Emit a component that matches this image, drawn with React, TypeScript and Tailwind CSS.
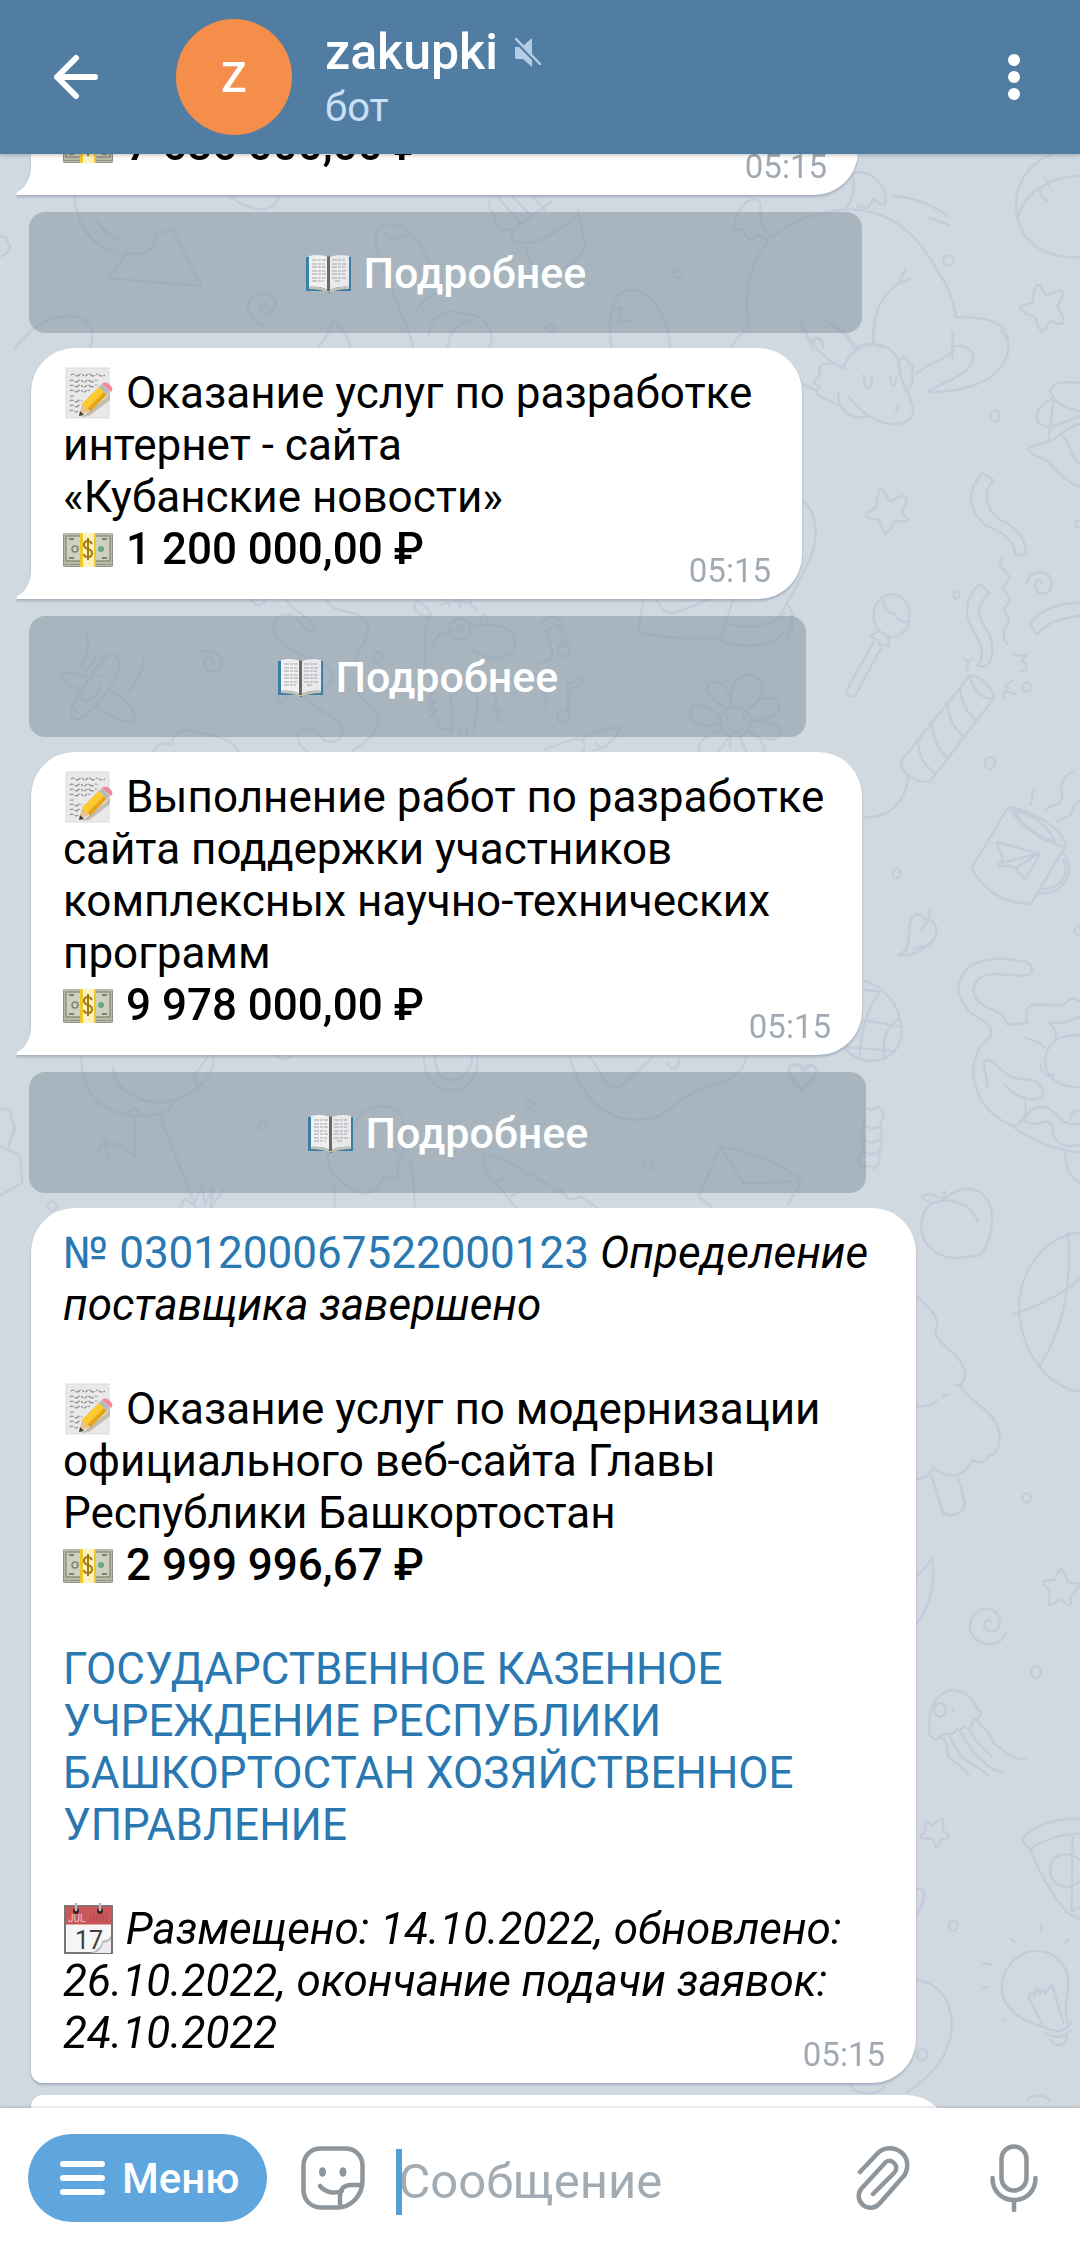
import clsx from "clsx"
import React from "react"

type IconProps = {
    className?: string
}

/* Emoji */

const inlineEmoji = "inline-block align-top w-[52px] h-[52px]"

const MemoEmoji: React.FC<IconProps> = ({ className }) => (
    <svg viewBox="0 0 52 52" className={className} role="img" aria-label="memo">
        <rect x="3" y="1" width="43" height="50" fill="#e9e9ea" stroke="#dcdcde" />
        <g stroke="#8a8a8d" strokeWidth="1.1" fill="none" strokeDasharray="4 1 6 1.5 2 1">
            <path d="M8 8q2-2 4 0t4 0 4 0 4 0 4 0 4 0 4 0 6 0" />
            <path d="M7 14q2-2 4 0t4 0 4 0 4 0 4 0 4 0 4 0" />
            <path d="M7 19q2-2 4 0t4 0 4 0 4 0 4 0 4 0 4 0" />
            <path d="M7 24q2-2 4 0t4 0 4 0 4 0 4 0" />
            <path d="M7 29h5M7 34q2-2 4 0t4 0 4 0M7 39q2-2 4 0t4 0 2 0M7 44q2-2 4 0t4 0" />
        </g>
        <path d="M19 50l24-19 4-6v8L26 49z" fill="#6b5a2f" opacity=".3" />
        <path d="M16 49l3-12 7 7z" fill="#e8c391" />
        <path d="M16 49l1-5 4 4z" fill="#3d3d3d" />
        <path d="M19 37l17-17 8 8-17 17c-1-2-2-3-3-3s-1-2-2-2-1-2-3-3z" fill="#e9a31a" />
        <path d="M19 37l17-17 5 5-17 17c-1 0-1-2-2-2s-1-2-3-3z" fill="#fbcb2f" />
        <path d="M36 20l3-3 8 8-3 3z" fill="#b4b8bf" />
        <path d="M39 17c2-2 5-2 8 1s3 5 1 7z" fill="#f08a98" />
    </svg>
)

const MoneyEmoji: React.FC<IconProps> = ({ className }) => (
    <svg viewBox="0 0 52 52" className={className} role="img" aria-label="money">
        <rect x="0" y="10" width="50" height="34" rx="2" fill="#8f8f80" />
        <rect x="1" y="10" width="48" height="31" rx="1" fill="#b9baa9" />
        <rect x="3" y="13" width="44" height="25" fill="#cfd0c0" stroke="#8f9080" strokeWidth="1.5" />
        <path d="M6 16h5M6 35h5M39 16h5M39 35h5" stroke="#7d7f6f" strokeWidth="2" />
        <path d="M1 42.500h48" stroke="#c3c3b5" />
        <circle cx="12" cy="26" r="3" fill="none" stroke="#7f8272" strokeWidth="1.500" />
        <circle cx="38" cy="26" r="3" fill="#6aa682" />
        <path d="M17 10h16v34H17z" fill="#efc62c" />
        <path d="M20 10h11v34H20z" fill="#faf3bd" />
        <path d="M29 21c-1-2-2-3-4-3s-4 1-4 4 2 3 4 4 4 1 4 4-2 4-4 4-4-1-4-3M25 15v22" fill="none" stroke="#a37a12" strokeWidth="2" />
    </svg>
)

const CalendarEmoji: React.FC<IconProps> = ({ className }) => (
    <svg viewBox="0 0 52 52" className={className} role="img" aria-label="calendar">
        <rect x="2" y="3" width="47" height="47" fill="#f6f6f6" stroke="#4b4b50" strokeWidth="1.500" />
        <path d="M2.500 3.500h46v18h-46z" fill="#c9585b" />
        <path d="M28 12v7M31 11v8M34 12v7M37 11v8M40 12v7M43 11v8" stroke="#b34448" />
        <circle cx="13" cy="8" r="3" fill="#3a2224" />
        <circle cx="37" cy="8" r="3" fill="#3a2224" />
        <path d="M13 0v7M37 0v7" stroke="#b9bcc0" strokeWidth="2.500" strokeLinecap="round" />
        <text x="5" y="19" fontSize="10" fontStyle="normal" fill="#f3c9ca" fontFamily="Roboto, sans-serif">JUL</text>
        <text x="12" y="46" fontSize="25" fontStyle="normal" fill="#3f3f44" fontFamily="Roboto, sans-serif">17</text>
        <path d="M48 32c-1 4-5 5-9 6-1 6-6 10-12 12h21z" fill="#bdbdc0" />
        <path d="M48 37c-3 2-5 2-8 3-1 5-4 8-8 10h16z" fill="#ececee" />
    </svg>
)

const BookEmoji: React.FC<IconProps> = ({ className }) => (
    <svg viewBox="2 0 48 52" className={className} role="img" aria-label="book">
        <path d="M3 10h45v34H30l-4 2-4-2H3z" fill="#3c7fa5" />
        <path d="M6 9c7-2 14-1 19 1v33c-5-3-12-4-19-3z" fill="#f0f0f2" />
        <path d="M46 9c-7-2-14-1-19 1v33c5-3 12-4 19-3z" fill="#e9e9ec" />
        <path d="M6 40c7-1 14 0 19 3h2c5-3 12-4 19-3v2c-7 0-13 1-18 3h-4c-5-2-11-3-18-3z" fill="#c5c2b4" />
        <path d="M24 9.500h3V44h-3z" fill="#6b6961" />
        <g stroke="#a3a3a9" strokeWidth="1" strokeDasharray="5 1 3 1">
            <path d="M9 13h14M9 17h13M9 20h14M9 24h13M9 27h14M9 31h13M9 34h12M29 13h13M29 17h14M29 20h13M29 24h14M29 27h13M29 31h14M32 34h6" />
        </g>
    </svg>
)

/* Bar icons */

const BackIcon: React.FC<IconProps> = ({ className }) => (
    <svg viewBox="0 0 46 46" className={className} fill="none" stroke="currentColor" strokeWidth="6" strokeLinecap="round" strokeLinejoin="round">
        <path d="M41 23H4M22 4L3 23l19 19" />
    </svg>
)

const MutedIcon: React.FC<IconProps> = ({ className }) => (
    <svg viewBox="0 0 28 30" className={className}>
        <path d="M9 9L18 1v18.500zM1 10h4l13 13v7L9 22H3c-1 0-2-1-2-2z" fill="currentColor" />
        <path d="M2 2l24 25" stroke="currentColor" strokeWidth="2.500" strokeLinecap="round" />
    </svg>
)

const DotsIcon: React.FC<IconProps> = ({ className }) => (
    <svg viewBox="0 0 12 46" className={className} fill="currentColor">
        <circle cx="6" cy="6" r="6" />
        <circle cx="6" cy="23" r="6" />
        <circle cx="6" cy="40" r="6" />
    </svg>
)

const MenuIcon: React.FC<IconProps> = ({ className }) => (
    <svg viewBox="0 0 45 36" className={className} stroke="currentColor" strokeWidth="6" strokeLinecap="round">
        <path d="M3 4h39M3 18h39M3 32h39" />
    </svg>
)

const StickerIcon: React.FC<IconProps> = ({ className }) => (
    <svg viewBox="0 0 64 64" className={className} fill="none" stroke="currentColor" strokeWidth="4.500" strokeLinecap="round" strokeLinejoin="round">
        <path d="M20 2.500h24c10 0 17.500 7 17.500 17.500v14C61.500 50 50 61.500 36 61.500H20C10 61.500 2.500 54 2.500 44V20C2.500 9.500 10 2.500 20 2.500z" />
        <path d="M61 39H50c-7 0-11 4-11 11v11" />
        <path d="M19 40c6 7 15 8 22 5" />
        <ellipse cx="21.500" cy="26" rx="3.500" ry="4.800" fill="currentColor" stroke="none" />
        <ellipse cx="42" cy="26" rx="3.500" ry="4.800" fill="currentColor" stroke="none" />
    </svg>
)

const AttachIcon: React.FC<IconProps> = ({ className }) => (
    <svg viewBox="0 0 54 64" className={className} fill="none" stroke="currentColor" strokeWidth="4.500" strokeLinecap="round" strokeLinejoin="round">
        <path d="M4 26L21 8c7-8 18-7 25-1s7 18 0 25L24 57c-5 6-12 6-17 2s-6-12-1-17l22-24c3-4 7-4 10-1s3 7 0 10L17 48" />
    </svg>
)

const MicIcon: React.FC<IconProps> = ({ className }) => (
    <svg viewBox="0 0 48 68" className={className} fill="none" stroke="currentColor" strokeWidth="4.500" strokeLinecap="round">
        <rect x="11.500" y="2.500" width="25" height="44" rx="12.500" />
        <path d="M2.500 34c0 13 9 22 21.500 22s21.500-9 21.500-22M24 57v9" />
    </svg>
)

/* Wallpaper */

const Doodles = () => (
    <svg
        viewBox="0 154 1080 1954"
        preserveAspectRatio="xMidYMin slice"
        aria-hidden="true"
        className="absolute inset-0 w-full h-full [&_*]:[vector-effect:non-scaling-stroke]"
        fill="none"
        stroke="#c5cbda"
        strokeWidth="2.300"
        strokeLinecap="round"
        strokeLinejoin="round"
    >
        {/* Paper plane, croissant, drum */}
        <g transform="scale(.3827 .3333)">
            <path d="M330 758L285 835l243 23-80-173-43 25c5 35-20 60-75 48zM195 590c5 90 45 150 110 165M250 660c20 30 40 50 65 65" />
            <path d="M690 978c-40-18-50-58-35-83 25-25 60-15 67 15-2 25-27 40-40 25-7-20 8-30 20-17" />
            <path d="M985 750c-15-50 15-90 55-75 50 25 70 85 90 125M985 750c25 100 75 200 95 290M1005 700c10 30 40 15 60 5M1090 930c20-40 50-60 100-50M1120 1010c0-50 40-90 90-70 50 0 90 50 70 100M1170 1045c0-50 30-80 70-85" />
            <path d="M1280 600c-15 40 30 40 10 70 20 10 15 30 50 15M1340 690l100-85M1355 725c45 20 125-45 155-85M1340 690c-10 20 0 40 15 35M1375 740c0 60 60 90 80 70 40-10 60-40 75-70l-20-110M1300 590l60 80M1340 590l50 60M1390 590l35 40" />
            <path d="M40 1045c40-65 100-105 160-95 40 15 50 50 35 95M830 1045c20-35 40-55 38-87 32 32 42 52 47 87M0 710c20-5 15 15 25 25 10 15-20 35-25 33M600 590c30 25 80 50 110 30 15-10 15-20 18-30" />
            <circle cx="1440" cy="985" r="12" />
        </g>

        {/* Flying dragon, ball, star */}
        <g transform="translate(600 0) scale(.3333)">
            <path d="M398 690c12-50 32-90 62-92 30 2 20 27 22 52 3 30 18 55 36 62-18 13-33 6-43-9l-10 9c-15 13-25 8-35-22-10-5-25 5-32 0zM735 628c25-28 30-58 23-103 12-13 42-10 62 5 30 25 40 50 37 80-17 5-27-5-37-15-5 20-15 30-25 30-10-10-15-15-27 7" />
            <path d="M450 998c-15-68-15-148 20-223 40-85 150-140 270-147 130-3 220 82 270 182 30 40 52 90 58 142 62-2 122 8 147 38 15 25 10 60 7 80M880 588c70 4 120 32 165 60M990 653l58 23M895 850c-45 35-80 80-73 180M915 810l-20 40 35-12M605 968l35 82M680 965c40 20 70 50 90 85M395 1045c10-30 30-50 55-50M1057 995c5 30 0 50 0 80M760 1045c30-15 60-20 90 0M640 1025c10-20 30-10 30 10" />
            <path d="M1350 465c-80 35-110 105-100 175 15 100 100 135 190 132M1255 650c20-80 105-120 185-123M1335 535l20 35M1320 570c2 20 15 30 22 32" />
            <path d="M1310 855c10-5 20 20 25 30 15-5 40-13 53-10 7 10-13 35-16 45 8 15 23 35 18 50-15 5-35-5-40-7-10 12-15 32-25 32-10-10-15-30-20-43-15-7-45-17-45-27 5-10 30-15 38-17 2-18 2-43 12-53z" />
            <path d="M35 1050c-15-90 0-170 50-180 75-5 125 90 125 180M38 935l24-13-4 46 42-10" />
            <circle cx="1045" cy="782" r="15" />
            <circle cx="232" cy="820" r="14" />
        </g>

        {/* Dragon head, streamers, lollipop, cracker, mug */}
        <g transform="translate(780 330) scale(.3333 .3954)">
            <path d="M190 98c10-35 50-60 90-62 45 0 75 25 78 60 0 40 40 70 42 110-5 25-35 33-70 32-50-8-90-30-125-70M190 98c-30-20-60-15-70-5s10 15-5 25c-20 10-10 20 5 25-20 10-5 30 20 30 10 10 20 10 30 15M175 160c-5 40 40 70 90 58M225 45L190 0M280 35V0M190 95C140 80 100 40 75 5M95 25c15-10 30 0 35 20M355 85c5-20 30-20 32 0 15 5 15 20 8 30 10 10 0 25-5 30s-10 18-15 10M250 115c5 45 30 40 25 0M330 115c0 35 20 30 18 5M345 205c10 0 8-10 10-12M410 112c25-25 60-30 90-45 20-10 20-30 18-60M515 45c30-15 65 5 65 25-10 45-90 60-135 85 90 5 190-20 225-70 30-40 10-70-10-85M68 135c15 10 30 15 45 20" />
            <path d="M302 403c10 0 18 18 28 30 15-5 35-18 48-12 5 10-10 30-12 42 10 8 22 12 18 20-15 4-33-2-40 0-8 12-16 30-26 32-12-5-16-25-20-35-15-2-40-2-42-10 5-12 25-15 32-22 2-15 4-40 14-45z" />
            <path d="M608 362l32 18c-35 30-20 75 20 100 40 15 80 40 78 90l-32-2c-5-45-45-55-90-75-55-40-55-90-8-131zM668 572c-15 10-5 30 5 38 20 10 15 20 5 30-15 10-5 20 5 30 8 10 5 20-5 28-12 10 0 22 8 32 5 10-5 20-10 25-8 10-5 25 5 40M740 640c10-35 70-40 75 0 0 35-50 35-50 5 5-20 20-15 20-5M598 642l30 22c-35 30-40 50-15 85 30 30 30 80 10 98-15 8-30 0-30 0 20-15 15-50-5-75-35-40-40-90 10-130zM900 690c-60 0-120 15-150 55l22 25c30-35 80-40 128-48" />
            <circle cx="335" cy="722" r="54" />
            <path d="M310 682c0 30 20 35 35 38 10 20 30 20 40 15M270 775l25-15 30 15 2 25-15-7-12 5-8-15-22-8zM280 790l-80 120c0 15 15 20 25 15l78-120M550 830l15 10 10-8M565 840l-5 22M705 822l35 2-15 15c25 5 15 25-5 23M700 885l-25 15 10 5M670 930l5-18 30 8" />
            <path d="M570 873c30 5 70 25 70 60L450 1142c-40 5-85-20-88-50zM570 873c5 35 35 60 68 60M540 905c5 40 20 60 48 82M502 945c5 40 20 65 50 85M455 990c5 50 20 70 50 95M412 1035c5 45 20 65 50 85M385 1130c-10 70-60 105-135 103" />
            <path d="M685 1207c60 5 160 50 173 95l-105 148c-80 5-150-40-178-90zM690 1212c30 40 80 75 160 95M705 1218c50 5 100 35 120 75-50-10-100-40-120-75zM845 1320c40 30 30 110-75 105M850 1340c20 30 0 75-65 73M650 1295l130 30-45 65-28-30-15-5-38 2 15-20zM655 1350l120-25-68 35M750 1200c15-10-5-25 15-35M795 1215c20-20 60-10 50-40-5-20 5-55 35-55M833 1242c20-10 40-5 45-30 5-15 12-22 22-20" />
            <path d="M380 1568c10-20 5-40 10-70 10-25 35-25 45-8 20-5 45 20 30 45-15 30-45 20-60 33M425 1515l20-20 5-35M810 155c10-30 60-22 90-22M810 155c15 30 50 45 90 50M815 175c-60 20-60 75 0 68 30-5 50-15 85-25M820 180l-15 100M745 302c20-20 50-5 90-35 20-10 40-25 65-30M745 302c20 25 40 10 70 40 25 25 50 45 85 55M840 265c40 20 20 50 60 75" />
            <path d="M68 430c50 40 50 110 10 170C50 650 20 690 0 720M22 695c20 20 25 50 0 85" />
            <circle cx="645" cy="218" r="14" />
            <circle cx="530" cy="671" r="9" />
            <circle cx="740" cy="903" r="12" />
            <circle cx="630" cy="1095" r="15" />
            <circle cx="350" cy="1374" r="12" />
            <circle cx="895" cy="490" r="9" />
            <circle cx="895" cy="1518" r="11" />
        </g>

        {/* Music notes, envelope, flower */}
        <g transform="translate(540 480) scale(.3444 .3333)">
            <path d="M300 360l-15 95c60 20 160 25 240 18l35-113M340 362c30 60 50 40 150-5M520 480c60 30 200 30 213-80M545 430c60 20 120 10 165-30" />
            <circle cx="567" cy="725" r="44" />
            <path d="M545 685c-80-40-70-90-20-75 20 10 30 50 35 72-20-60 20-110 60-95s30 70-15 100c40-45 90-40 90-10s-30 40-80 45c60 0 90 15 80 40s-60 20-90-10c30 20 50 40 45 63M525 710c-60-60-100-30-85 5 10 20 40 30 85 15M530 750c-50 20-70 30-68 65M550 770l-30 45M580 770l20 45M545 705v15M590 705v15M545 740c10 25 35 25 42 0M553 770v30" />
            <path d="M0 435c20-35 55-30 62-5l25 85c-10 25-40 15-35-10 5-15 15-10 20-5l-20-65-35 15 20 75c0 15-20 25-37 20M90 610l30-20c5 30-20 30-35 40l0 85c-15 20-40 15-35-10 5-15 20-15 30-8l0-90zM0 630c15 10 20 30 15 55M10 810c60-20 90-40 110-30 40-35 70-30 115-40-10 30-40 65-80 72M120 782c15 10 10 30 0 35M160 790l15 10" />
        </g>

        {/* Plane, dino, llama */}
        <g transform="translate(0 595) scale(.3333)">
            <path d="M260 110c10 40 5 75-20 105M285 185c-5 20-15 30-30 43M432 192c-5 40-20 65-45 95M330 180c30-5 35 40 15 75s-50 70-70 90-40 40-60 20c-10-25 10-50 30-80s60-100 85-105zM300 245c-30-5-60 30-55 65 15 15 50 0 58-40M260 245c-40-15-75-15-75-5 0 20 35 35 60 50M330 290c50 20 80 60 72 88-30 5-80-15-115-40M215 335c10 10 25 20 30 30" />
            <path d="M605 170c40-10 70 20 58 45-15 25-55 15-50-15 5-15 25-15 27 3" />
            <path d="M755 15c20 30 40 10 40-5M860 15c20 40 80 50 85 85-10 25-35-5-50-25-20-30-70-15-75 20 10 80 120 80 160 120 60 50-40 80-70 60-10 50 60 70 100 100 50 50-20 90-45 50-30-40-80-20-70 10 5 20 20 30 30 35M980 15c20 50 110 20 125 80 5 50-50 70-30 120 10 50-30 70 30 110 60 50 30 90-50 145M460 470c10-25 40-30 55-20 0-40 50-55 90-35 40 5 100 20 110 55" />
            <path d="M1245 25c10-15 40 10 50 40-40 0-60-25-50-40zM1295 65c-40 50-10 70-20 120-10 40 30 60 20 110l-10 20 20 5-20 20 25 5-20 20 25 5v30l40 5M1320 30c50-20 100-10 110 15M1340 15l10 20M1375 15l5 20M1410 15l5 20M1300 150c10-40 40-40 75-45M1420 95c50-15 130 0 125 50-5 60-90 50-125 20M1440 80c5-30 30-20 20 10M1350 300c10 40 10 70 5 110M1430 290c5 40 0 80-10 120M1480 290l10 30-10 20 20 5-10 30 20 0M1380 395v20M1400 395v20" />
            <circle cx="1380" cy="102" r="31" />
            <circle cx="1380" cy="102" r="10" />
            <circle cx="1135" cy="186" r="15" />
            <circle cx="845" cy="308" r="12" />
        </g>

        {/* Balloon, kid, carrot, letter */}
        <g transform="translate(0 1050) scale(.5612 .3333)">
            <path d="M145 20c0 80 20 150 70 170 50 20 90 0 95-35M200 50c10 90 60 110 95 108 50-20 90-80 85-140M345 80l25-60M345 80l10 40M225 190l15-15 15 20M240 195v125l-35-45M185 270l10 60M185 275l-15 35M185 275l20 15M285 200l65 275M320 475l10-30 15 20 15-60 5 60 15-50-5 60 25-60" />
            <path d="M755 15c0 60 15 105 50 105s50-50 45-105M775 15c0 50 10 75 30 75s40-40 35-75M630 230c10-50 40-75 70-55 25 30 25 70 20 110 0 40-20 50-10 90-10 20-25 0-25 0-10 60-40 65-60 40-30-30-45-70-40-115 15-10 30-20 45-70zM690 250c0 30 10 50 25 65M730 330c10 40 5 80 10 140M595 400c0 30 5 60 0 70" />
            <path d="M920 475c-20-50-60-100-60-155 10-20 50 20 80 50 30 20 40 40 60 60l-5-20 20 40 20-10 30 35M880 400l15-15M910 440l15-15M1015 20c20 120 60 190 120 190 60 0 60-60 110-90 50-30 80-40 85-100M1050 20c20 30 20 90 50 95 20-30 60-80 60-95M1190 40c5 25 20 20 20-15" />
            <path d="M1430 118c-10-30-25-40-25-60 5-20 25-20 28 5 10-25 25-15 22 5-5 20-20 30-25 50zM1283 290c50 10 120 60 145 105l-25 70M1283 290l-38 150 25 35M1283 290l42 110 100-5M0 180c15-10 25 10 20 30 10 20 10 40 0 50M0 290l35 25 5 85-40 35M15 290l10-60M490 15c10 15 20 15 30 5" />
            <ellipse cx="467" cy="225" rx="7" ry="12" />
            <ellipse cx="943" cy="163" rx="7" ry="12" />
            <ellipse cx="1155" cy="344" rx="8" ry="14" />
            <ellipse cx="93" cy="468" rx="8" ry="14" />
        </g>

        {/* Basketball, candy, cat, peach, tree, beach ball */}
        <g transform="translate(780 940) scale(.3333 .3827)">
            <path d="M355 40c20-10 30-20 28-40M355 40c40 5 80-15 105-40M250 105c70 20 115 70 115 140-10 80-120 90-170 40M250 130l50 5c-30 30-60 100-60 170M250 210l110 15M355 205c-40 30-50 60-42 105M200 280l145 10M68 393c-30-15-50-40-38-60 12-12 32-5 38 8 10-20 40-20 42 3 0 20-25 30-42 49zM250 445c15-15 20 5 30-2 15-15 35 5 30 20-15 15-5 25-5 45 5 30-10 50-8 60 5 15-10 35-25 25s-30 10-35-10 15-20 12-40c-10-30 0-60 5-70M250 480c15 15 40 15 52 5M248 515c15 20 40 15 55 5M250 550c15 15 40 10 50 0" />
            <path d="M750 90c15-15 0-35-25-35-70-12-160-10-185 50-15 40 15 80 60 100 30 15 40 30 30 50-40 20-60 70-45 120 15 60 60 90 110 110 30 0 50-30 40-60M750 90c-20 10-80-5-125 0-40 10-60 40-30 70 30 25 75 20 88 62l60-6c-10-30 0-45 20-47 40-5 70 10 95-5 15-15 25-15 42-3M805 215c30 5 60 0 95-15M805 215c20 15 30 30 20 45M733 255c25 5 40 10 60 25M900 250c-60-5-105 20-105 70 5 45 50 65 105 65M780 325c5 20 20 40 42 25M612 325c0-20 20-10 30-5 40 40 70 45 110 45 40 10 50 45 20 50-50 5-75-15-98-38M612 325l12 60M733 470c20-40 70-50 110 0 10 5 20 15 60 10M733 470c40 30 60-15 85 15-5 50 40 60 82 50M695 485c60 40 120 60 205 70M855 555c5 30 5 60 45 80M870 470c0-20 15-25 30-25" />
            <path d="M425 670c15-10 40-5 68 10-20 10-50 10-68-10zM493 680c40-45 120-40 140 20 10 45-5 100-35 125-50 5-100 15-140-15-45-30-45-95-5-120 50-20 115-5 142 45M493 655v20M410 932c50 35 75 65 55 92 10 40 95 65 90 115-2 15-10 20-15 25 30 50 130 70 118 150-5 25-20 35-30 30-10 25-30 25-50 15-30 50-80 50-118 20-15 25-30 30-50 30M410 1220c30 0 45-5 60-15M488 1195l15-8M525 1163l15 0M455 1400l35 98c20 10 50 5 62-15-2-30-8-60-22-85" />
            <path d="M900 765c-110 10-185 100-183 205 10 110 90 200 183 210M865 765c10 130-10 250-88 350M705 975c80-20 140-50 195-90" />
            <circle cx="740" cy="1458" r="12" />
        </g>

        {/* Moon, jellyfish, pizza, bulb */}
        <g transform="translate(850 1500) scale(.3333 .3827)">
            <path d="M265 0l15 30c20 15 40 10 62-5l3-25M245 150c-10 20-25 35-45 48M245 150c15 60-5 130-45 172" />
            <path d="M633 180c10 5 15 25 22 35 10 5 35 0 32 10-5 10-20 20-27 28 0 8 10 20-5 22-10-2-15-15-23-15-8 5-25 15-35 13-5-15 3-25 3-35-8-10-25-15-20-25 10-5 25-2 33-5 8-10 10-25 20-28z" />
            <path d="M468 348c-20 40-90 40-108-10-5-60 80-75 90-20 0 30-45 35-48 8 2-15 15-15 20-10" />
            <path d="M240 600c-10-50 15-95 65-103 45 0 70 30 80 55 15-5 10 15-5 20-10 0-15 5-15 20-10 5-20 5-25 0-5 10-15 10-20 5-10 20-20 15-30 15-15 0-20 5-30 15-20-5-30-20-20-30zM275 620c20 15 15 30 20 50 20 20 40 20 60 48M300 620c20 40 30 40 40 55 30 20 60 30 75 45M330 605c20 20 25 40 40 55 30 20 50 50 90 50M355 595c20 40 45 50 70 75M380 575c15 25 40 25 50 60 30 15 50 45 95 42M310 545v10" />
            <circle cx="270" cy="548" r="18" />
            <path d="M245 850c10-5 25-20 35-15 2 15-5 20 0 30 10 5 20 12 15 18-10 3-18 0-22 5-5 10-8 20-15 18-8-8-5-15-10-20-10-3-35 0-38-5 5-10 15-12 18-18-2-10-8-20 0-22 8 0 12 5 17 9z" />
            <path d="M520 895c-5-30 80-65 170-62M520 895l20 18c40-25 90-40 150-42M540 913c30 70 70 120 110 165l40 18M668 875l-3 200 25-12M600 970c0-50 60-55 90-30M600 970c5 45 60 50 90 25M200 1015c30-5 30 30 0 68M200 1255c120 5 170 190-30 292" />
            <path d="M590 1380c-80-20-135-50-135-110 5-50 50-92 105-92 60 0 100 45 95 95-5 45-15 60 0 100M575 1365l-40-65c10-20 15-10 20 0 0-20 10-40 15-5 5-20 10-20 15-5l20-25 35 100M590 1380c30 15 60 5 75-15M590 1395c30 15 60 5 72-10M600 1410c20 25 50 15 50-10M398 1210l28 5M398 1273h16M465 1357v3M482 1145l12 10M571 1112v14M656 1147l-12 10" />
            <circle cx="558" cy="450" r="15" />
            <circle cx="310" cy="1112" r="13" />
            <circle cx="217" cy="1450" r="15" />
            <path d="M0 1528c10 25 80 30 105 5M530 1568c20-15 50-15 70 0" />
        </g>
    </svg>
)

/* Messages */

type BubbleProps = {
    children?: React.ReactNode
    time?: string
    tail?: boolean
    className?: string
}

const Bubble: React.FC<BubbleProps> = ({ children, time, tail, className }) => (
    <div className={clsx("relative ml-[2px] mr-1 grid bg-white text-black rounded-[44px] pl-8 pr-5 pt-[19px] pb-3 drop-shadow-[0_2px_1px_rgba(95,115,135,0.4)]", className)}>
        <div className="col-start-1 row-start-1 pb-3 text-[44px] leading-[52px]">{children}</div>
        {time && <time className="col-start-1 row-start-1 self-end justify-self-end text-[33px] leading-8 mr-[11px] text-[#a1aab3]">{time}</time>}
        {tail && (
            <svg viewBox="0 0 16 30" className="absolute bottom-0 -left-[15px] w-4 h-[30px]" aria-hidden="true">
                <path d="M15 0c0 13-5 23-14 27-1 1-1 3 1 3h14V0z" fill="#fff" />
            </svg>
        )}
    </div>
)

const DetailsButton = () => (
    <button className="mt-[17px] h-[121px] w-full rounded-2xl bg-[#6b828c]/40 text-white text-[43px] leading-[52px] font-medium">
        <BookEmoji className="inline-block align-top w-12 h-[52px]" /> Подробнее
    </button>
)

const Price: React.FC<{ value: string }> = ({ value }) => (
    <p className="font-medium"><MoneyEmoji className={inlineEmoji} /> {value} ₽</p>
)

const link = "text-[#2a78b2]"

const App = () => {
    return (
        <div className="h-screen flex flex-col overflow-hidden bg-[#d0d8e0] font-[Roboto,sans-serif]">
            <header className="relative z-10 flex-none h-[154px] flex items-center pl-[54px] pr-[60px] bg-[#517da2] text-white shadow-[0_1px_4px_rgba(0,0,0,0.25)]">
                <button aria-label="Назад"><BackIcon className="w-[46px] h-[46px]" /></button>
                <div className="ml-[76px] h-[116px] w-[116px] flex-none flex items-center justify-center rounded-full bg-[#f48e4a] text-[42px] font-medium">Z</div>
                <div className="ml-[33px] pt-1 flex-1 min-w-0">
                    <div className="flex items-center gap-4">
                        <h1 className="text-[50px] leading-[58px] font-medium">zakupki</h1>
                        <MutedIcon className="w-7 h-[30px] text-[#b3cee4]" />
                    </div>
                    <div className="text-[40px] leading-[54px] text-[#c8e1f7]">бот</div>
                </div>
                <button aria-label="Ещё"><DotsIcon className="w-3 h-[46px]" /></button>
            </header>

            <main className="relative flex-1 min-h-0 overflow-hidden">
                <Doodles />
                <div className="relative -mt-[54px] pl-[29px] flex flex-col items-start gap-[15px]">
                    <article className="w-[833px] max-w-full">
                        <Bubble time="05:15" tail className="rounded-bl-none">
                            <Price value="7 686 000,00" />
                        </Bubble>
                        <DetailsButton />
                    </article>

                    <article className="w-[777px] max-w-full">
                        <Bubble time="05:15" tail className="rounded-bl-none">
                            <p><MemoEmoji className={inlineEmoji} /> Оказание услуг по разработке интернет - сайта «Кубанские&nbsp;новости»</p>
                            <Price value="1 200 000,00" />
                        </Bubble>
                        <DetailsButton />
                    </article>

                    <article className="w-[837px] max-w-full">
                        <Bubble time="05:15" tail className="rounded-bl-none">
                            <p><MemoEmoji className={inlineEmoji} /> Выполнение работ по разработке сайта поддержки участников комплексных научно-технических программ</p>
                            <Price value="9 978 000,00" />
                        </Bubble>
                        <DetailsButton />
                    </article>

                    <div className="flex flex-col items-start gap-3">
                        <article className="w-[891px] max-w-full">
                            <Bubble time="05:15" className="rounded-bl-xl">
                                <p><a href="#order" className={link}>№ 0301200067522000123</a> <em>Определение поставщика завершено</em></p>
                                <p className="mt-[52px]"><MemoEmoji className={inlineEmoji} /> Оказание услуг по модернизации официального веб-сайта Главы Республики Башкортостан</p>
                                <Price value="2 999 996,67" />
                                <p className="mt-[52px]"><a href="#customer" className={link}>ГОСУДАРСТВЕННОЕ КАЗЕННОЕ УЧРЕЖДЕНИЕ РЕСПУБЛИКИ БАШКОРТОСТАН ХОЗЯЙСТВЕННОЕ УПРАВЛЕНИЕ</a></p>
                                <p className="mt-[52px] italic"><CalendarEmoji className={inlineEmoji} /> Размещено: 14.10.2022, обновлено: 26.10.2022, окончание подачи заявок: 24.10.2022</p>
                            </Bubble>
                        </article>
                        <article className="w-[925px] max-w-full">
                            <Bubble className="rounded-tl-xl h-24" />
                        </article>
                    </div>
                </div>
            </main>

            <footer className="relative z-10 flex-none h-[136px] flex items-center pt-1 pl-7 pr-[42px] bg-white text-[#8e959b] shadow-[0_-1px_3px_rgba(0,0,0,0.15)]">
                <button className="h-[88px] flex-none flex items-center gap-[17px] pl-8 pr-7 rounded-full bg-[#5fa5de] text-white text-[42px] font-medium">
                    <MenuIcon className="w-[45px] h-9" />
                    Меню
                </button>
                <button aria-label="Стикеры" className="ml-[34px] flex-none"><StickerIcon className="w-16 h-16" /></button>
                <label className="relative ml-[31px] mt-2 flex-1 min-w-0">
                    <span className="sr-only">Сообщение</span>
                    <input type="text" placeholder="Сообщение" className="block w-full pl-[2px] h-[66px] text-[49px] leading-[66px] text-black placeholder:text-[#a3abb2] outline-none" />
                    <span className="absolute left-0 top-0 w-[6px] h-[66px] bg-[#559fd6]" />
                </label>
                <button aria-label="Прикрепить" className="flex-none"><AttachIcon className="w-[54px] h-16" /></button>
                <button aria-label="Голосовое сообщение" className="ml-20 flex-none"><MicIcon className="w-12 h-[68px]" /></button>
            </footer>
        </div>
    )
}

export default App
